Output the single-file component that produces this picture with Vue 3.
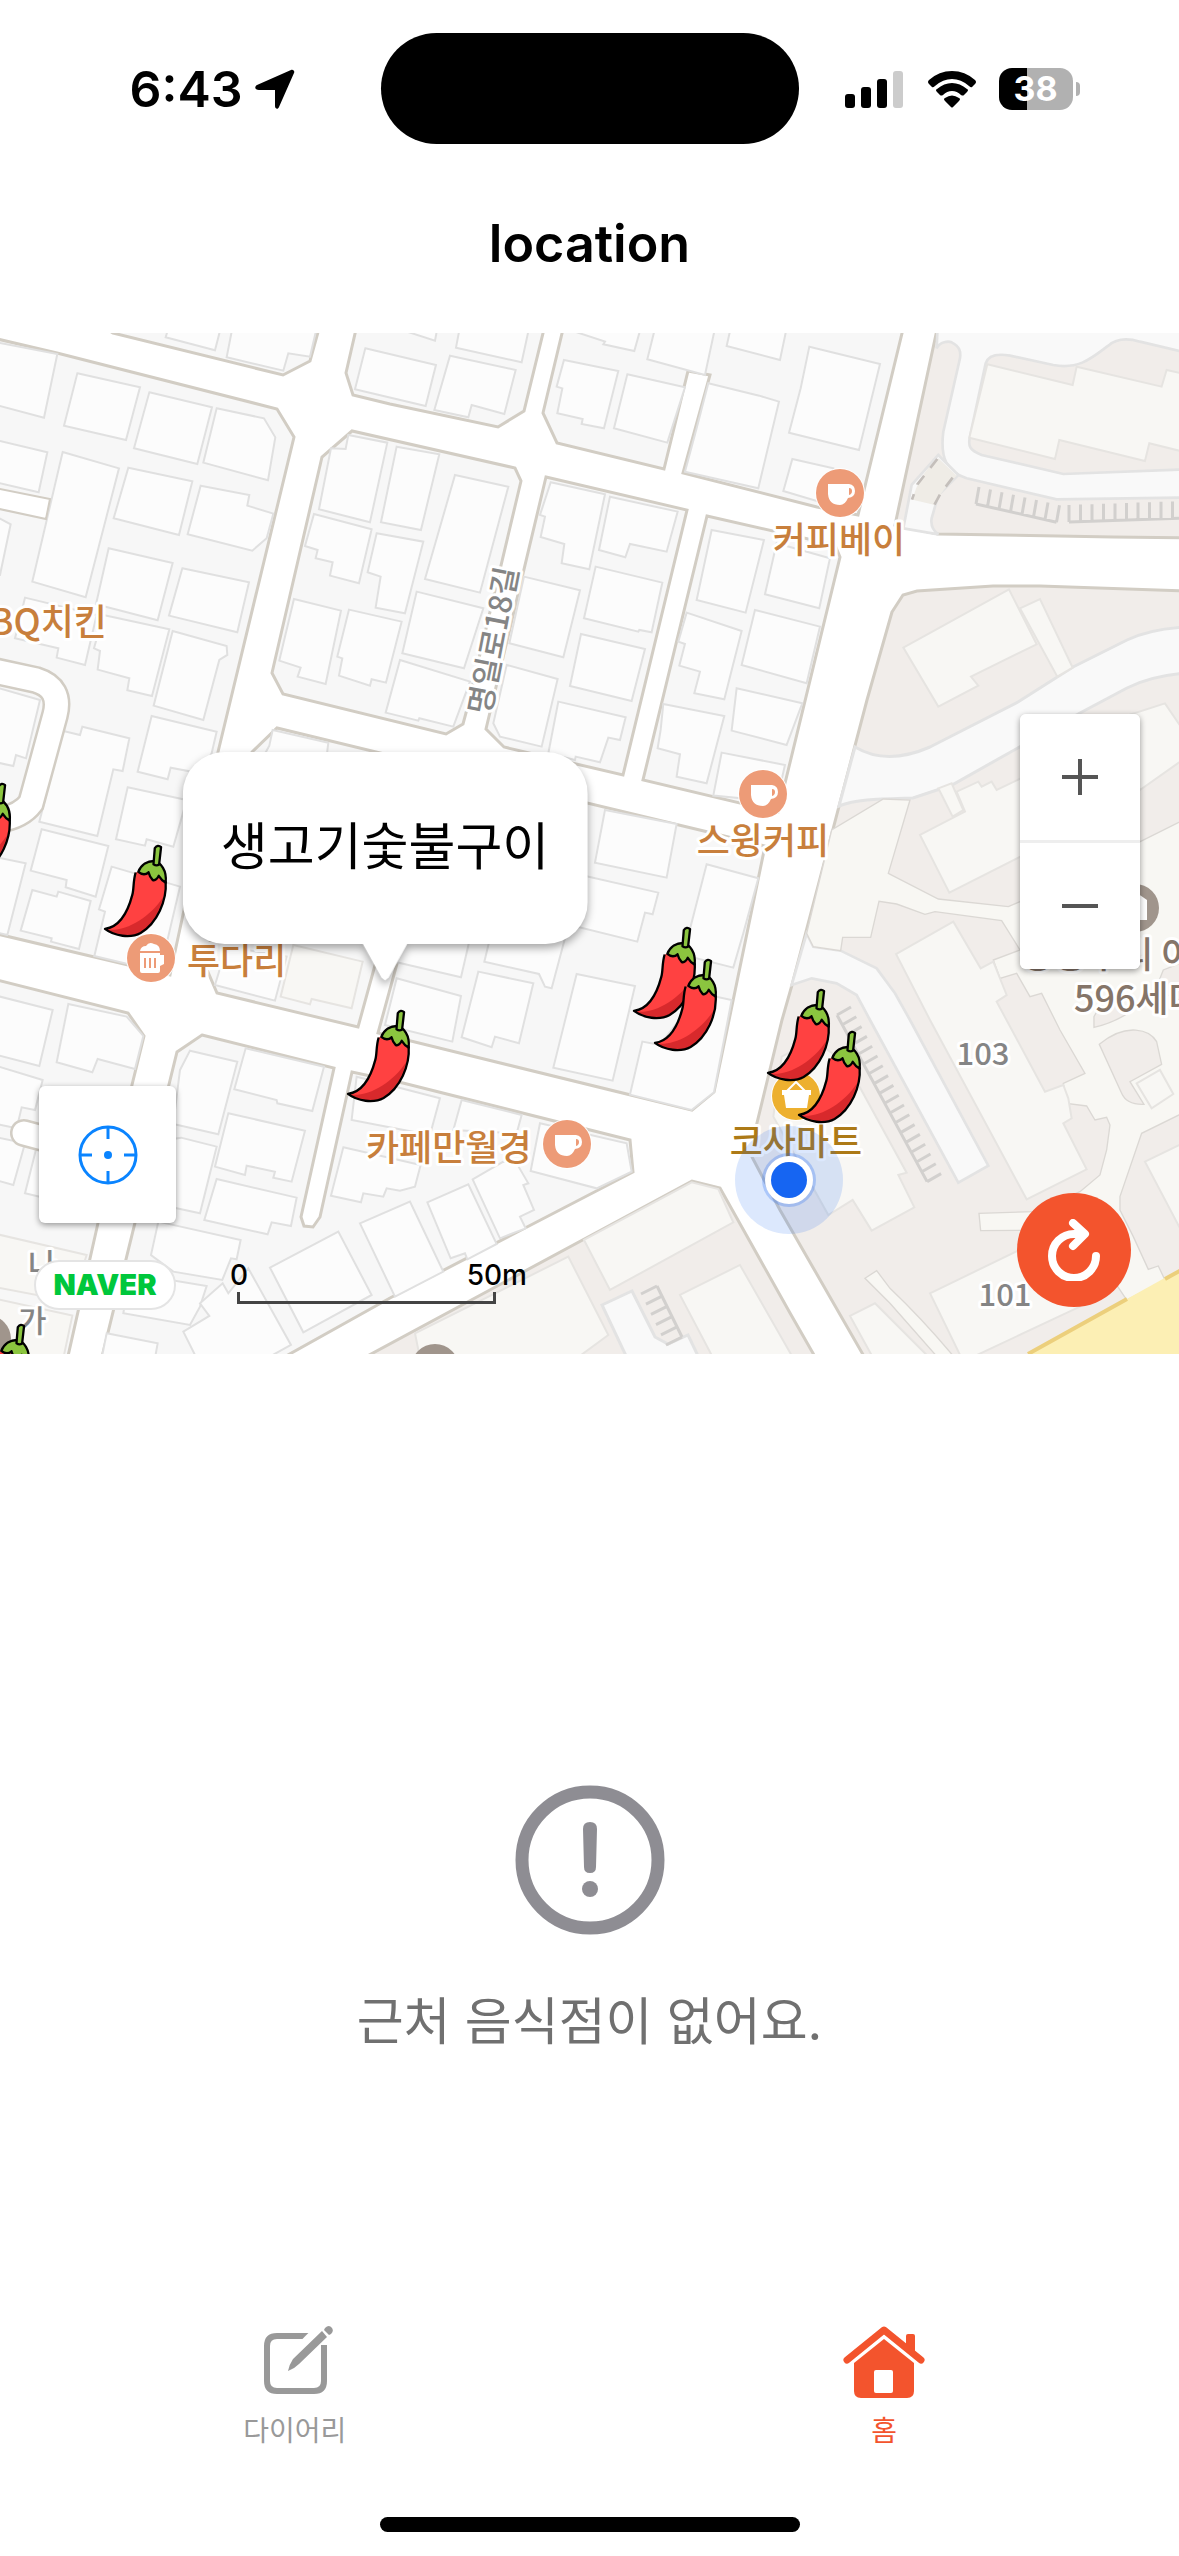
<template>
  <div class="screen">
    <header>
      <div class="status-bar">
        <div class="status-left">
          <span class="time">6:43</span>
          <svg width="40" height="40" viewBox="0 0 40 40" aria-hidden="true">
            <path d="M36 1c2-1 4 1 3 3L24 38c-1 3-4 2-4-1V21H4c-4 0-5-3-2-5z" />
          </svg>
        </div>
        <div class="island"></div>
        <div class="status-right">
          <svg width="60" height="38" viewBox="0 0 60 38" aria-hidden="true">
            <rect x="0" y="24" width="10" height="14" rx="3" />
            <rect x="16" y="17" width="10" height="21" rx="3" />
            <rect x="32" y="9" width="10" height="29" rx="3" />
            <rect x="48" y="1" width="10" height="37" rx="3" fill="#ccc" />
          </svg>
          <svg width="50" height="38" viewBox="0 0 50 38" aria-hidden="true">
            <path d="M2 14Q0 12 2 10Q12 1 25 1T48 10Q50 12 48 14L45 17Q44 18 42 16Q34 9 25 9T8 16Q6 18 5 17Z" />
            <path d="M10 22Q8 20 10 19Q17 13 25 13T40 19Q42 20 40 22L37 25Q36 26 34 25Q30 21 25 21T16 25Q14 26 13 25Z" />
            <path d="M18 31Q16 29 18 28Q25 23 32 28Q34 29 32 31L26 37Q25 38 24 37Z" />
          </svg>
          <div class="battery"><span>38</span></div>
        </div>
      </div>
      <h1>location</h1>
    </header>

    <section class="map" aria-label="지도">
      <svg class="map-canvas" viewBox="0 333 1179 1021" preserveAspectRatio="xMidYMid slice">
        <defs>
          <symbol id="chili" viewBox="-4 -4 197 290">
            <path d="M95 85C87 110 90 135 85 152C70 210 45 250 2 256C30 278 80 285 110 268C160 238 190 170 186 112L145 70Z" fill="#ff4141" />
            <path d="M2 257C60 268 135 225 178 160C165 210 140 250 110 268C80 285 30 278 2 257Z" fill="#d8292c" />
            <path d="M95 85C87 110 90 135 85 152C70 210 45 250 2 256C30 278 80 285 110 268C160 238 190 170 186 112" fill="none" stroke="#000" stroke-width="7" stroke-linejoin="round" />
            <path d="M103 83C112 60 132 50 150 50C172 55 190 78 186 116C178 112 172 106 165 95C160 105 154 110 147 108C141 102 136 92 134 84C126 92 114 92 103 83Z" fill="#8bc53f" stroke="#000" stroke-width="7" stroke-linejoin="round" />
            <path d="M149 60L153 11Q162 -1 172 8L166 61Q158 66 149 60Z" fill="#8bc53f" stroke="#000" stroke-width="7" stroke-linejoin="round" />
          </symbol>
          <symbol id="cup" viewBox="0 0 50 50">
            <circle cx="25" cy="25" r="25" fill="#fff" />
            <circle cx="25" cy="25" r="24" fill="#ed9b77" />
            <path d="M13 16h21q6 1 6 7t-7 7q-3 7-8 7-11 0-12-11z" fill="#fff" />
            <path d="M34 20q3 0 3 3t-3 4z" fill="#ed9b77" />
          </symbol>
        </defs>

        <g class="blocks">
          <polygon v-for="(p, i) in blocks" :key="i" :points="p" />
        </g>
        <g class="zones">
          <polygon v-for="(p, i) in zones" :key="i" :points="p" />
        </g>

        <!-- paths inside the apartment complexes -->
        <g class="lanes">
          <path d="M855 747C880 762 907 757 930 747L1018 702L1073 667L1127 640Q1153 628 1190 627V673Q1153 675 1127 688L1080 713L952 785L913 798C880 799 857 799 839 806Z" />
          <g :transform="at(780, 325)">
            <path d="M474 -20L470 70C480 50 505 48 515 52C540 65 543 80 540 100L490 320C480 400 500 440 560 460L830 523L1250 517V432L850 447L605 390C570 375 563 365 570 335L617 115C625 90 650 85 690 92L820 120C900 135 940 95 985 62C1010 40 1040 38 1080 50L1250 90V-20Z" />
            <path d="M475 390L395 480L370 610L475 628Q450 610 455 580L475 510L535 450Z" />
            <path class="underpass" d="M475 400L530 452Q480 500 465 540L398 524Q415 450 475 400Z" />
            <path class="dashes" d="M472 402L412 478L396 524M518 458L482 505L463 540" />
          </g>
          <g :transform="at(780, 1020)">
            <path d="M35 -105L95 -125L170 -110L230 -75L270 0L535 488L625 437L390 0L345 -80L290 -155L182 -208L100 -220L80 -260Z" />
            <path class="plaza" d="M80 -260L155 -570L310 -663L390 -660L325 -440L475 -363L685 -340L720 -355L1250 -620V270L1197 285L1085 340L1020 530V570L1060 650L1105 748L1135 738L1155 780L1040 840L900 630L602 632L597 580L760 575L900 515L960 465L980 390L990 315L980 292L945 300L920 258L860 250L850 190L915 160L840 30L785 -80L750 -70L710 -140L660 -125L640 -180L720 -210L665 -298L465 -325L435 -317L350 -348L297 -356L272 -248H188L182 -208L100 -220Z" />
            <path class="green" d="M958 73C1040 5 1110 30 1130 65L1145 133L1050 185L1092 253Q1040 255 1025 220Z" />
            <path class="green" d="M942 22V-10L970 -60L1060 -30Q1000 10 942 22Z" />
            <path class="green" d="M1130 -100L1150 -150L1250 -190V-40L1150 -80Z" />
            <path class="plaza" d="M255 775L290 752L330 805Q430 900 530 1020H480L330 850Z" />
          </g>
          <path d="M602 1305L632 1291L655 1337L668 1344L688 1335L700 1360H628Z" />
        </g>

        <g v-for="(tile, i) in tiles" :key="i" :transform="at(tile.x, tile.y)">
          <polygon v-for="(p, j) in tile.houses" :key="j" :points="p" class="house" />
          <polygon v-for="(p, j) in tile.halls" :key="'h' + j" :points="p" class="hall" />
        </g>

        <g class="stalls">
          <path v-for="(d, i) in stalls" :key="i" :d="d" />
        </g>

        <!-- dead-end alleys, casing below and surface above -->
        <g class="alleys">
          <path v-for="(d, i) in alleys" :key="'c' + i" :d="d" class="casing" />
          <path v-for="(d, i) in alleys" :key="'s' + i" :d="d" />
        </g>
        <path d="M-10 487L50 499L46 519L-10 507Z" fill="#fff" stroke="#d2cdc4" stroke-width="2" />
        <g>
          <path d="M1028 1354L1179 1270V1354Z" fill="#fcefb4" />
          <path d="M1028 1354L1127 1299M1165 1279L1185 1268" stroke="#eccf7c" stroke-width="4" />
        </g>

        <circle cx="1135" cy="908" r="24" fill="#a0958c" />
        <path d="M1122 900l12-9 13 9v20h-25z" fill="#fff" />
        <circle cx="435" cy="1368" r="24" fill="#a0958c" />
        <circle cx="-13" cy="1339" r="24" fill="#a0958c" />

        <use v-for="(c, i) in cafes" :key="i" href="#cup" :x="c.x - 25" :y="c.y - 25" width="50" height="50" />
        <g>
          <circle cx="151" cy="958" r="25" fill="#fff" />
          <circle cx="151" cy="958" r="24" fill="#ed9b77" />
          <path d="M140 951q1-5 6-5 3-5 8-2 6 1 6 7zM140 953h20v2h4v9l-4 2v5q0 2-2 2h-16q-2 0-2-2z" fill="#fff" />
          <path d="M145 958v10M150 958v10M155 958v10" stroke="#ed9b77" stroke-width="2" />
        </g>
        <g>
          <circle cx="796" cy="1096" r="25" fill="#fff" />
          <circle cx="796" cy="1096" r="24" fill="#edb02f" />
          <path d="M782 1090h29v5h-2l-2 13h-21l-2-13h-2z" fill="#fff" />
          <path d="M787 1091l9-9 9 9" fill="none" stroke="#fff" stroke-width="2" />
        </g>

        <text
          v-for="l in labels"
          :key="l.text"
          :x="l.x"
          :y="l.y"
          :class="['label', l.kind]"
          :text-anchor="l.anchor"
          >{{ l.text }}</text
        >
        <text class="label street" transform="translate(490 716) rotate(-79)">명일로18길</text>

        <g>
          <circle cx="789" cy="1180" r="54" fill="#1665f2" opacity="0.15" />
          <circle cx="789" cy="1180" r="27" fill="#1665f2" opacity="0.25" />
          <circle cx="789" cy="1180" r="24" fill="#fff" />
          <circle cx="789" cy="1180" r="18" fill="#1665f2" />
        </g>
        <use v-for="(p, i) in pins" :key="i" href="#chili" :x="p.x - 1" :y="p.y - 1" width="65" height="96" />
      </svg>

      <div class="bubble">생고기숯불구이</div>

      <div class="zoom">
        <button type="button" aria-label="확대">
          <svg width="36" height="36" viewBox="0 0 36 36"><path d="M18 0v36M0 18h36" /></svg>
        </button>
        <button type="button" aria-label="축소">
          <svg width="36" height="36" viewBox="0 0 36 36"><path d="M0 18h36" /></svg>
        </button>
      </div>

      <button type="button" class="locate" aria-label="현재 위치">
        <svg width="60" height="60" viewBox="0 0 60 60">
          <circle cx="30" cy="30" r="28" />
          <path d="M30 2v12M30 46v12M2 30h12M46 30h12" />
          <circle cx="30" cy="30" r="4" class="dot" />
        </svg>
      </button>

      <span class="naver">NAVER</span>

      <div class="scale">
        <div class="scale-text"><span>0</span><span>50m</span></div>
        <div class="scale-line"></div>
      </div>

      <button type="button" class="refresh" aria-label="새로고침">
        <svg width="52" height="62" viewBox="0 0 52 62">
          <path d="M48 37A22 22 0 1 1 26 15H35M25 4L37 15L25 27" />
        </svg>
      </button>
    </section>

    <main class="empty">
      <svg width="150" height="150" viewBox="0 0 150 150" aria-hidden="true">
        <circle cx="75" cy="75" r="68" fill="none" stroke="#8e8d93" stroke-width="13" />
        <path d="M68 44q0-7 7-7t7 7l-1 38q0 6-6 6t-6-6z" fill="#8e8d93" />
        <circle cx="75" cy="104" r="8" fill="#8e8d93" />
      </svg>
      <p>근처 음식점이 없어요.</p>
    </main>

    <nav class="tabs">
      <a href="#diary">
        <svg width="82" height="74" viewBox="0 0 82 74" fill="none" stroke="#999" aria-hidden="true">
          <path d="M56 11H23Q13 11 13 21V56Q13 66 23 66H60Q70 66 70 56V20" stroke-width="6" />
          <path d="M74 -1L30 43" stroke="#fff" stroke-width="15" />
          <path d="M68 6L73 12L45 39Q40 44 34 46Q35 40 39 34Z" fill="#999" stroke="none" />
          <path d="M71 3q4-4 7 0 2 3-1 6l-2 1-5-5z" fill="#999" stroke="none" />
        </svg>
        <span>다이어리</span>
      </a>
      <a href="#home" class="active" aria-current="page">
        <svg width="82" height="74" viewBox="0 0 82 74" fill="#f3542d" aria-hidden="true">
          <path d="M63 23V11q0-2 2-2h5q2 0 2 2v20z" />
          <path d="M4 35L41 5L78 35" fill="none" stroke="#f3542d" stroke-width="7" stroke-linecap="round" stroke-linejoin="round" />
          <path d="M41 14L71 38V66Q71 73 64 73H18Q11 73 11 66V38Z" />
          <rect x="31" y="45" width="19" height="23" rx="2" fill="#fff" />
        </svg>
        <span>홈</span>
      </a>
    </nav>
    <div class="home-indicator"></div>
  </div>
</template>

<script setup>
const at = (x, y) => `translate(${x} ${y}) scale(0.3333)`

// city blocks between the roads
const blocks = [
  '-7,338 57,353 277,409 294,437 218,752 170,975 -7,933',
  '113,333 283,375 310,361 320,325 100,325',
  '357,325 346,373 353,395 390,404 498,427 524,411 545,325',
  '564,325 543,413 557,443 664,469 688,371 710,375 683,473 817,507 858,515 904,325',
  '352,431 322,457 272,673 283,694 446,734 463,724 466,713 521,481 515,468',
  '546,477 687,510 623,775 504,747 486,729',
  '707,516 835,545 840,557 778,812 643,780',
  '252,752 277,728 430,765 358,1027 217,993 205,965',
  '450,770 708,832 765,846 727,1030 714,1092 692,1110 378,1033',
  '-7,979 128,1013 144,1036 98,1223 66,1365 -7,1365',
  '202,1035 334,1068 301,1217 304,1226 313,1227 320,1217 352,1072 403,1083 630,1140 633,1172 390,1298 270,1365 100,1365 177,1052'
]

const zones = [
  '938,325 895,525 938,534 1113,537 1190,538 1190,325',
  '892,612 903,595 917,591 993,586 1040,586 1190,591 1190,1365 869,1365 780,1210 752,1157 756,1127 782,1020 792,985 867,700',
  '360,1360 692,1181 720,1188 790,1313 818,1362'
]

const alleys = [
  'M-10 670L36 680Q62 688 55 715L31 803Q20 818 -8 821',
  'M24 1133L50 1140'
]

const tiles = [
  {
    x: 0,
    y: 325,
    houses: [
      '-20,50 172,87 132,278 -20,238',
      '232,145 420,187 378,345 192,302',
      '448,202 636,247 592,417 402,370',
      '650,250 792,280 826,337 804,466 610,413',
      '-20,343 142,382 116,502 -20,470',
      '188,381 357,430 257,817 97,770',
      '385,428 577,469 537,630 341,580',
      '602,482 748,510 742,542 820,566 800,640 757,677 563,628',
      '326,670 518,714 473,886 288,838',
      '547,730 747,772 712,922 507,872',
      '75,818 290,870 255,1020 170,998 175,970 45,940',
      '310,870 508,913 456,1113 382,1096 388,1060 293,1034 300,978 282,970',
      '518,918 680,963 682,990 658,1005 610,1185 461,1142',
      '505,10 497,37 645,76 662,10',
      '697,10 680,97 850,137 865,85 930,95 950,10',
      '1096,70 1308,120 1277,243 1065,193',
      '1045,330 1162,353 1110,592 957,553 993,370 1037,372',
      '1190,365 1318,388 1263,615 1143,592',
      '942,567 1115,613 1077,775 990,752 998,712 947,700 953,675 915,663',
      '1130,625 1270,650 1215,865 1127,848 1142,755 1103,742',
      '882,822 1023,857 977,1077 893,1055 902,1028 838,1007',
      '1047,854 1205,890 1158,1073 1115,1063 1110,1082 1017,1052 1027,1000 1012,995',
      '-20,570 32,598 0,750 -20,750'
    ],
    halls: []
  },
  {
    x: 390,
    y: 325,
    houses: [
      '195,450 355,485 270,803 105,762',
      '80,800 280,850 222,1030 37,985',
      '30,1005 240,1070 190,1205 88,1180 85,1187 -13,1163',
      '20,10 135,47 142,10',
      '209,10 198,68 395,112 417,10',
      '180,92 377,135 343,267 245,240 235,277 133,255',
      '522,105 685,138 642,310 575,297 578,282 502,265 517,190 500,185',
      '712,148 885,187 832,353 672,310',
      '795,10 772,103 945,150 975,10',
      '955,175 1108,212 1167,230 1105,490 885,440 920,310',
      '540,15 645,50 640,58 733,78 752,10',
      '1022,10 1010,63 1170,105 1190,10',
      '482,472 645,508 598,733 515,715 523,657 452,636 465,575 450,570',
      '660,515 863,560 830,680 720,657 706,697 627,675',
      '617,725 817,773 785,922 748,915 745,920 582,880',
      '402,755 570,796 520,997 358,955',
      '573,927 765,972 725,1128 540,1083',
      '350,1020 503,1062 455,1265 330,1235 310,1195',
      '505,1130 707,1177 690,1245 655,1238 630,1312 557,1295 555,1305 475,1285',
      '965,615 1122,645 1067,863 920,825',
      '890,863 1055,918 1003,1123 913,1105 930,1040 868,1022 885,957 865,950',
      '1095,855 1290,905 1250,1075 1055,1020',
      '1160,655 1320,700 1288,850 1125,808',
      '1040,1090 1237,1135 1190,1260 1025,1217',
      '820,1137 1003,1173 950,1375 860,1355 870,1288 803,1270 812,1215',
      '995,1283 1185,1320 1160,1430 970,1412'
    ],
    halls: []
  },
  {
    x: 780,
    y: 325,
    houses: [
      '88,65 300,117 237,375 27,323 62,190',
      '37,402 160,430 150,540 10,498'
    ],
    halls: [
      '622,118 878,180 890,125 1145,185 1160,135 1250,155 1250,390 1108,355 1095,408 838,345 825,402 568,338',
      '370,968 687,793 770,958 573,1055 595,1082 475,1145',
      '720,850 780,822 878,1028 832,1055'
    ]
  },
  {
    x: 0,
    y: 700,
    houses: [
      '120,0 78,175 48,165 40,198 -20,185 -20,-40',
      '187,92 240,105 247,80 388,115 368,213 340,208 292,408 118,365',
      '455,48 650,95 635,160 600,220 512,203 503,238 413,215',
      '383,262 560,300 520,440 440,418 435,437 348,418',
      '125,388 325,438 287,590 197,562 200,540 92,512',
      '97,570 170,590 175,575 272,603 237,747 153,725 155,715 62,692',
      '335,500 540,560 480,815 283,768 315,635 297,628',
      '-20,470 77,490 22,705 -20,695',
      '818,90 985,128 980,170 790,170 808,137',
      '645,855 825,902 860,770 680,740',
      '205,912 380,950 430,1008 405,1107 293,1077 277,1117 170,1087',
      '-20,885 158,930 118,1098 -20,1062'
    ],
    halls: ['880,735 1088,785 1055,925 935,897 930,913 842,890']
  },
  {
    x: 390,
    y: 700,
    houses: [
      '645,330 860,372 830,533 615,488',
      '560,522 805,578 788,643 765,638 742,725 540,675',
      '950,493 1105,535 1060,700 1030,803 880,765',
      '20,835 213,888 187,1025 -15,975',
      '265,815 430,850 387,1030 315,1010 305,1042 215,1012',
      '560,822 735,858 668,1142 490,1103',
      '930,880 1025,900 972,1177 905,1230 720,1184 757,1025 810,1035',
      '283,785 300,715 525,715 485,865 465,860 447,822',
      '20,787 213,832 240,715 45,715'
    ],
    halls: []
  },
  {
    x: 780,
    y: 700,
    houses: [],
    halls: [
      '420,405 555,335 530,275 595,245 605,260 635,245 650,270 900,150 900,380 508,578',
      '475,265 515,250 550,330 518,350',
      '1000,60 1155,10 1250,150 1080,270'
    ]
  },
  {
    x: 0,
    y: 1020,
    houses: [
      '570,92 712,125 655,343 520,312 540,150',
      '737,85 972,140 937,273 832,250 830,240 703,208',
      '685,280 915,332 875,485 820,473 825,455 740,437 735,465 645,440',
      '543,353 650,380 600,580 460,550 500,360',
      '650,477 890,533 873,618 815,607 803,643 613,600',
      '475,605 722,660 710,718 693,715 667,780 520,755 453,705',
      '390,760 620,798 600,860 570,915 370,880',
      '668,790 685,820 745,745 873,975 800,1015 590,1015 550,935 628,888 600,850',
      '810,743 1015,635 1115,825 910,937',
      '1080,610 1230,545 1330,755 1185,830',
      '320,940 473,970 465,1015 305,1015',
      '1030,382 1262,435 1245,500 1200,512 1160,505 1150,530 1090,520 1083,547 993,527',
      '1070,170 1320,235 1290,345 1055,300',
      '-20,135 128,180 105,270 65,262 50,325 -20,310',
      '-20,350 75,370 40,495 -20,478',
      '110,380 200,400 160,540 75,520'
    ],
    halls: ['-20,640 260,705 215,845 -20,800', '-20,835 217,887 190,1015 -20,1015']
  },
  {
    x: 390,
    y: 1020,
    houses: [
      '215,240 395,285 380,340 190,330',
      '450,310 710,370 725,455 620,505 422,453',
      '248,478 340,425 380,430 415,490 400,495 432,570 390,590 407,625 330,655',
      '112,547 235,493 320,672 232,718 225,700 182,715'
    ],
    halls: [
      '582,660 905,487 985,507 1030,607 660,810',
      '75,940 535,710 655,945 560,1015 90,1015',
      '870,825 1050,735 1210,1015 970,1015'
    ]
  },
  {
    x: 780,
    y: 1020,
    houses: [],
    halls: [
      '348,-198 520,-295 602,-155 640,-175 680,-75 650,-55 795,215 850,195 865,235 875,295 850,310 920,448 740,538 450,0',
      '200,130 380,458 355,465 403,562 275,632 218,540 145,585 -20,290 5,110 100,60',
      '450,820 780,660 900,860 570,1015 545,1015',
      '210,888 285,850 450,1015 280,1015',
      '1070,190 1140,150 1180,222 1115,265',
      '1095,425 1250,350 1250,720'
    ]
  }
]

// a kerb line with evenly spaced parking dividers
function stallRow(x, y, dx, dy, count, tx, ty) {
  let d = `M${x} ${y}L${x + dx * count} ${y + dy * count}`
  for (let i = 0; i <= count; i++) {
    d += `M${x + dx * i} ${y + dy * i}l${tx} ${ty}`
  }
  return d
}

const stalls = [
  stallRow(976, 504, 11.5, 2.6, 7, 3, -17),
  stallRow(1069, 522, 11.5, -0.4, 10, 0, -17),
  stallRow(837, 1015, 5.3, 9.8, 17, 14, -8),
  stallRow(657, 1286, 5, 10.2, 5, -16, 8)
]

const cafes = [
  { x: 840, y: 493 },
  { x: 763, y: 794 },
  { x: 567, y: 1144 }
]

const labels = [
  { text: 'BBQ치킨', x: 107, y: 635, kind: 'food', anchor: 'end' },
  { text: '커피베이', x: 839, y: 553, kind: 'food', anchor: 'middle' },
  { text: '스윙커피', x: 763, y: 854, kind: 'food', anchor: 'middle' },
  { text: '투다리', x: 187, y: 974, kind: 'food', anchor: 'start' },
  { text: '카페만월경', x: 366, y: 1161, kind: 'food', anchor: 'start' },
  { text: '코사마트', x: 796, y: 1155, kind: 'mart', anchor: 'middle' },
  { text: '강동우리 아파트', x: 1021, y: 968, kind: 'apt', anchor: 'start' },
  { text: '596세대', x: 1074, y: 1012, kind: 'apt', anchor: 'start' },
  { text: '103', x: 983, y: 1065, kind: 'num', anchor: 'middle' },
  { text: '101', x: 1005, y: 1306, kind: 'num', anchor: 'middle' },
  { text: '나', x: 28, y: 1276, kind: 'num', anchor: 'start' },
  { text: '가', x: 18, y: 1332, kind: 'num', anchor: 'start' }
]

const pins = [
  { x: -52, y: 782 },
  { x: 104, y: 844 },
  { x: 633, y: 926 },
  { x: 654, y: 958 },
  { x: 347, y: 1009 },
  { x: 767, y: 988 },
  { x: 798, y: 1030 },
  { x: -33, y: 1323 }
]
</script>

<style>
body {
  margin: 0;
  background: #fff;
}
</style>

<style scoped>
.screen {
  min-height: 100vh;
  display: flex;
  flex-direction: column;
  background: #fff;
  color: #000;
  font-family: Inter, 'Noto Sans CJK KR', sans-serif;
}

button {
  border: none;
  padding: 0;
  background: #fff;
  cursor: pointer;
  display: flex;
  align-items: center;
  justify-content: center;
}

.status-bar {
  display: grid;
  grid-template-columns: 1fr auto 1fr;
  align-items: center;
  height: 177px;
}

.status-left,
.status-right {
  display: flex;
  align-items: center;
}

.status-left {
  justify-content: flex-end;
  gap: 12px;
  padding-right: 86px;
}

.time {
  font-size: 50px;
  font-weight: 600;
}

.island {
  width: 418px;
  height: 111px;
  border-radius: 56px;
  background: #000;
}

.status-right {
  gap: 22px;
  padding-left: 46px;
}

.battery {
  position: relative;
  width: 74px;
  height: 42px;
  border-radius: 13px;
  background: linear-gradient(90deg, #000 38%, #b1b1b1 38%);
  color: #fff;
  font-size: 34px;
  font-weight: 700;
  line-height: 42px;
  text-align: center;
}

.battery::after {
  content: '';
  position: absolute;
  right: -7px;
  top: 14px;
  width: 4px;
  height: 14px;
  border-radius: 0 4px 4px 0;
  background: #b1b1b1;
}

h1 {
  margin: 0;
  padding: 35px 0 57px;
  font-size: 52px;
  font-weight: 600;
  line-height: 64px;
  text-align: center;
}

.map {
  position: relative;
  aspect-ratio: 1179 / 1021;
  overflow: hidden;
}

.map-canvas {
  display: block;
  width: 100%;
  height: 100%;
}

.blocks polygon {
  fill: #f7f7f7;
  stroke: #d2cdc4;
  stroke-width: 3;
}

.zones polygon {
  fill: #f1edea;
  stroke: #d2cdc4;
  stroke-width: 3;
}

.lanes path {
  fill: #f9f9f9;
  stroke: #e3e3e3;
  stroke-width: 3;
}

.lanes g path {
  stroke-width: 8;
}

.lanes g .plaza {
  fill: #f8f7f3;
  stroke: #dbd8d4;
  stroke-width: 4;
}

.lanes g .green {
  fill: #f1edea;
  stroke: #dbd8d4;
  stroke-width: 4;
}

.lanes g .underpass {
  fill: #efece6;
  stroke: none;
}

.lanes g .dashes {
  fill: none;
  stroke: #c4bfbb;
  stroke-dasharray: 34 30;
}

.house {
  fill: #fcfcfc;
  stroke: #e0e0e0;
  stroke-width: 6;
}

.hall {
  fill: #f8f7f4;
  stroke: #e6e4e1;
  stroke-width: 6;
}

.stalls path {
  fill: none;
  stroke: #d2d0ce;
  stroke-width: 3;
}

.alleys path {
  fill: none;
  stroke: #fff;
  stroke-width: 23;
  stroke-linecap: round;
}

.alleys .casing {
  stroke: #d2cdc4;
  stroke-width: 28;
}

.label {
  font-family: 'Noto Sans CJK KR', sans-serif;
  font-size: 36px;
  font-weight: 500;
  stroke: #fff;
  stroke-width: 6px;
  stroke-linejoin: round;
  paint-order: stroke;
}

.food {
  fill: #c87f3c;
}

.mart {
  fill: #ad7a17;
}

.apt {
  fill: #857569;
}

.num,
.street {
  fill: #858585;
  font-size: 31px;
}

.bubble {
  position: absolute;
  left: 33%;
  top: 41%;
  transform: translateX(-50%);
  padding: 58px 38px 60px;
  margin-left: -4px;
  border-radius: 42px;
  background: #fff;
  filter: drop-shadow(0 4px 4px rgba(0, 0, 0, 0.35));
  font-size: 51px;
  line-height: 74px;
  white-space: nowrap;
}

.bubble::after {
  content: '';
  position: absolute;
  left: 50%;
  top: 100%;
  width: 46px;
  height: 38px;
  margin: -1px 0 0 -23px;
  background: #fff;
  clip-path: polygon(0 0, 100% 0, 58% 92%, 50% 100%, 42% 92%);
}

.zoom {
  position: absolute;
  right: 39px;
  top: 381px;
  width: 120px;
  border-radius: 6px;
  overflow: hidden;
  box-shadow: 0 2px 6px rgba(0, 0, 0, 0.4);
}

.zoom button {
  width: 100%;
  height: 126px;
}

.zoom button + button {
  height: 129px;
  border-top: 3px solid #eee;
}

.zoom path {
  stroke: #555;
  stroke-width: 4;
}

.locate {
  position: absolute;
  left: 39px;
  bottom: 131px;
  width: 137px;
  height: 137px;
  border-radius: 6px;
  box-shadow: 0 2px 6px rgba(0, 0, 0, 0.4);
}

.locate svg {
  fill: none;
  stroke: #0a84ff;
  stroke-width: 3;
}

.locate .dot {
  fill: #0a84ff;
  stroke: none;
}

.naver {
  position: absolute;
  left: 34px;
  bottom: 44px;
  width: 138px;
  border: 2px solid #e4e4e4;
  border-radius: 26px;
  background: #fff;
  color: #00c73c;
  font-size: 29px;
  font-weight: 900;
  line-height: 46px;
  text-align: center;
}

.scale {
  position: absolute;
  left: 237px;
  bottom: 50px;
  width: 259px;
}

.scale-text {
  display: flex;
  justify-content: space-between;
  margin: 0 -31px 0 -7px;
  font-size: 28px;
  font-weight: 500;
  line-height: 34px;
}

.scale-line {
  height: 9px;
  border: solid #444;
  border-width: 0 3px 3px;
}

.refresh {
  position: absolute;
  right: 48px;
  bottom: 47px;
  width: 114px;
  height: 114px;
  border-radius: 50%;
  background: #f3542d;
}

.refresh path {
  fill: none;
  stroke: #fff;
  stroke-width: 8;
  stroke-linecap: round;
  stroke-linejoin: round;
}

.empty {
  flex: 1;
  display: flex;
  flex-direction: column;
  align-items: center;
  gap: 50px;
  padding-top: 431px;
}

.empty p {
  margin: 0;
  color: #707070;
  font-size: 51px;
  line-height: 74px;
}

.tabs {
  display: flex;
}

.tabs a {
  flex: 1;
  display: flex;
  flex-direction: column;
  align-items: center;
  gap: 12px;
  color: #999;
  font-size: 28px;
  line-height: 40px;
  text-decoration: none;
}

.tabs .active {
  color: #f3542d;
}

.home-indicator {
  width: 420px;
  height: 15px;
  margin: 66px auto 24px;
  border-radius: 8px;
  background: #000;
}
</style>
